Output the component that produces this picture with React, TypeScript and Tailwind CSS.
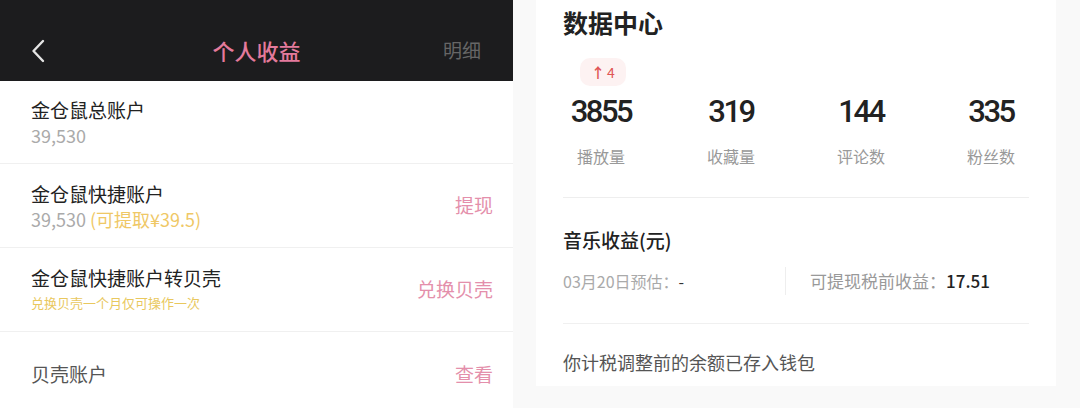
import React from "react";

const font = { fontFamily: '"Noto Sans CJK SC", "Noto Sans", sans-serif' };

function Row({ title, sub, action }: { title: string; sub?: React.ReactNode; action?: string }) {
  return (
    <div className="shrink-0 flex items-center justify-between h-[84px] pl-[31px] pr-[20px] border-b border-[#f0f0f0]">
      <div className="flex flex-col">
        <div className="text-[19px] leading-[27px] text-[#222]">{title}</div>
        {sub}
      </div>
      {action && <div className="text-[19px] text-[#e48fab]">{action}</div>}
    </div>
  );
}

export default function App() {
  return (
    <div className="w-[1080px] h-[408px] flex bg-[#f9f9f9] overflow-hidden" style={font}>
      <div className="w-[513px] h-full bg-white flex flex-col shrink-0">
        <div className="shrink-0 h-[81px] bg-[#1c1c1e] flex items-center justify-between pl-[30px] pr-[32px] pt-[20px]">
          <svg width="16" height="24" viewBox="0 0 16 24" fill="none">
            <path d="M13 2 L3.5 12 L13 22" stroke="#e5e5e5" strokeWidth="2.4" strokeLinecap="round" strokeLinejoin="round" />
          </svg>
          <div className="text-[22px] font-medium text-[#e47a9c] ml-[24px]">个人收益</div>
          <div className="text-[19px] text-[#666]">明细</div>
        </div>
        <div className="shrink-0 h-[83px] flex flex-col justify-center pl-[31px] border-b border-[#f0f0f0]">
          <div className="text-[19px] leading-[27px] text-[#222]">金仓鼠总账户</div>
          <div className="text-[18px] leading-[25px] text-[#aaa]">39,530</div>
        </div>
        <Row
          title="金仓鼠快捷账户"
          action="提现"
          sub={
            <div className="text-[18px] leading-[25px] text-[#aaa]">
              39,530 <span className="text-[#efc866]">(可提取¥39.5)</span>
            </div>
          }
        />
        <Row
          title="金仓鼠快捷账户转贝壳"
          action="兑换贝壳"
          sub={<div className="text-[13px] leading-[24px] text-[#e9c85e]">兑换贝壳一个月仅可操作一次</div>}
        />
        <div className="shrink-0 flex items-center justify-between h-[84px] pl-[31px] pr-[20px]">
          <div className="text-[19px] text-[#555]">贝壳账户</div>
          <div className="text-[19px] text-[#e48fab]">查看</div>
        </div>
      </div>
      <div className="w-[23px] shrink-0" />
      <div className="w-[520px] h-[386px] bg-white flex flex-col shrink-0">
        <div className="pl-[27px] pt-[6px] text-[25px] font-bold text-[#222] leading-[32px]">数据中心</div>
        <div className="pl-[44px] mt-[20px] h-[28px] flex">
          <div className="flex items-center justify-center w-[46px] h-[28px] rounded-[10px] bg-[#fdf2f2] text-[14px] text-[#e05555]">
            <span className="text-[14px] font-bold mr-[2px]">↑</span>4
          </div>
        </div>
        <div className="grid grid-cols-4 w-[520px] mt-[7px]">
          {[
            ["3855", "播放量"],
            ["319", "收藏量"],
            ["144", "评论数"],
            ["335", "粉丝数"],
          ].map(([n, l]) => (
            <div key={l} className="flex flex-col items-center">
              <div className="text-[31px] leading-[38px] font-medium text-[#222] tracking-[-2.5px]" style={{ fontFamily: '"Roboto", "Noto Sans", sans-serif' }}>{n}</div>
              <div className="text-[16px] leading-[24px] mt-[13px] text-[#999]">{l}</div>
            </div>
          ))}
        </div>
        <div className="mx-[27px] mt-[29px] border-t border-[#eeeeee]" />
        <div className="pl-[27px] mt-[29px] text-[19px] leading-[26px] font-medium text-[#222]">音乐收益(元)</div>
        <div className="flex items-center pl-[27px] mt-[13px] h-[30px]">
          <div className="w-[222px] text-[16px] text-[#aaa]">
            03月20日预估：<span className="text-[#333]">-</span>
          </div>
          <div className="h-[28px] border-l border-[#eee]" />
          <div className="pl-[24px] text-[17px] text-[#999]">
            可提现税前收益：<span className="text-[17px] text-[#222] font-medium">17.51</span>
          </div>
        </div>
        <div className="mx-[27px] mt-[27px] border-t border-[#f0f0f0]" />
        <div className="pl-[27px] mt-[26px] text-[18px] leading-[24px] text-[#555]">你计税调整前的余额已存入钱包</div>
      </div>
    </div>
  );
}
